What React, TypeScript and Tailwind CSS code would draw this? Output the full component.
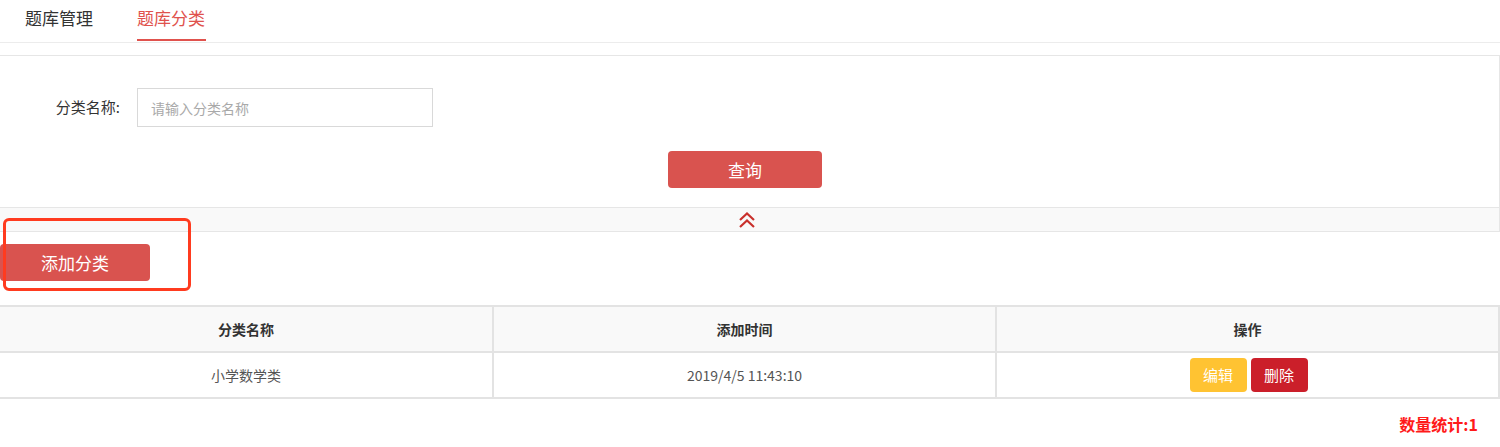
import { useState } from 'react';

const rows = [{ name: '小学数学类', time: '2019/4/5 11:43:10' }];

export default function App() {
  const [keyword, setKeyword] = useState('');

  return (
    <div
      className="relative w-[1500px] h-[447px] bg-white text-[#333]"
      style={{ fontFamily: '"Noto Sans CJK SC", "Noto Sans", sans-serif' }}
    >
      {/* tabs */}
      <div className="flex h-[43px] border-b border-[#ececec] pl-[25px] gap-[44px]">
        <div className="text-[17px] leading-[36px] text-[#333]">题库管理</div>
        <div className="text-[17px] leading-[36px] text-[#e0524d] border-b-2 border-[#e0524d] h-[41px] w-[69px]">
          题库分类
        </div>
      </div>

      {/* filter panel */}
      <div className="mt-[12px] border border-[#e6e6e6] border-l-0">
        <div className="flex items-center pt-[32px] h-[71px]">
          <label className="w-[121px] text-right text-[15px] text-[#333] pr-[1px]">分类名称:</label>
          <input
            value={keyword}
            onChange={(e) => setKeyword(e.target.value)}
            placeholder="请输入分类名称"
            className="ml-[16px] w-[296px] h-[39px] border border-[#d9d9d9] px-[13px] text-[14px] outline-none placeholder:text-[#a9a9a9]"
          />
        </div>
        <div className="flex justify-center pr-[9px] pt-[24px] pb-[19px]">
          <button className="w-[154px] h-[37px] rounded-[4px] bg-[#d9534f] text-white text-[17px]">查询</button>
        </div>
        <div className="h-[24px] bg-[#f9f9f9] border-t border-[#e6e6e6] flex justify-center pr-[6px] items-center">
          <svg width="20" height="18" viewBox="0 0 20 18" fill="none" stroke="#c9302c" strokeWidth="2.2">
            <path d="M3 9 L10 2.5 L17 9" />
            <path d="M3 16 L10 9.5 L17 16" />
          </svg>
        </div>
      </div>

      {/* add button */}
      <div className="pt-[12px] h-[73px]">
        <button className="w-[150px] h-[37px] rounded-[4px] bg-[#d9534f] text-white text-[17px]">添加分类</button>
      </div>

      {/* table */}
      <table className="w-[1500px] border-collapse text-[14px] table-fixed">
        <thead>
          <tr className="bg-[#f9f9f9] h-[46px]">
            <th className="w-[493px] border-y-2 border-r-2 border-[#e3e3e3] font-bold text-[#333]">分类名称</th>
            <th className="w-[503px] border-y-2 border-r-2 border-[#e3e3e3] font-bold text-[#333]">添加时间</th>
            <th className="border-y-2 border-r-2 border-[#e3e3e3] font-bold text-[#333]">操作</th>
          </tr>
        </thead>
        <tbody>
          {rows.map((r) => (
            <tr key={r.name} className="h-[46px]">
              <td className="border-b-2 border-r-2 border-[#e3e3e3] text-center text-[#555]">{r.name}</td>
              <td className="border-b-2 border-r-2 border-[#e3e3e3] text-center text-[#555]">{r.time}</td>
              <td className="border-b-2 border-r-2 border-[#e3e3e3] text-center">
                <div className="flex justify-center gap-[4px] pl-[2px]">
                  <button className="w-[57px] h-[34px] rounded-[4px] bg-[#ffc332] text-white text-[15px]">编辑</button>
                  <button className="w-[57px] h-[34px] rounded-[4px] bg-[#cb1f2a] text-white text-[15px]">删除</button>
                </div>
              </td>
            </tr>
          ))}
        </tbody>
      </table>

      <div className="flex justify-end pr-[22px] pt-[13px]">
        <span className="text-[16px] font-bold text-[#ff1a1a]">数量统计:1</span>
      </div>

      {/* annotation box */}
      <div className="absolute left-[3px] top-[218px] w-[188px] h-[73px] border-[3px] border-[#ff3b1f] rounded-[6px]" />
    </div>
  );
}
